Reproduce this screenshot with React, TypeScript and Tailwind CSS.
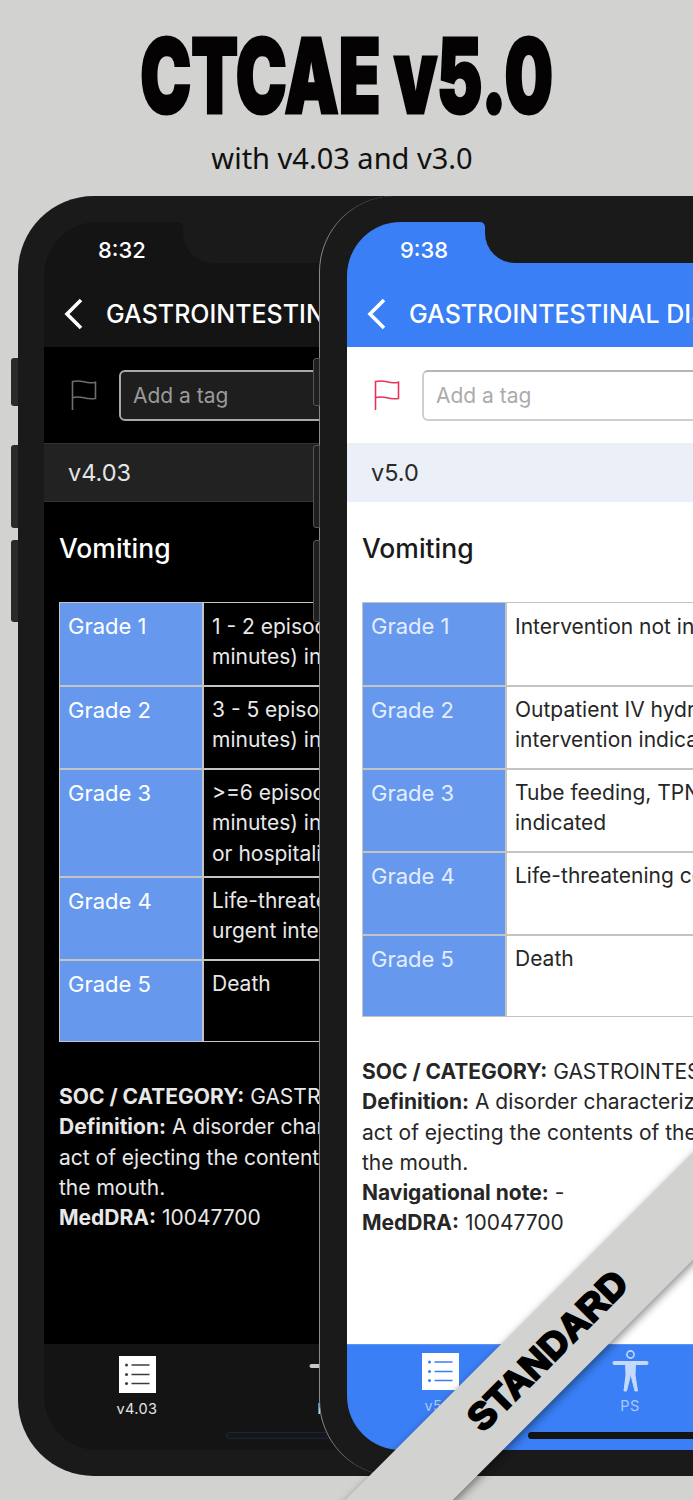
import type { ReactNode } from "react";

type Grade = { label: string; lines: string[]; height: string };

type Theme = {
  outer: string;
  side: string;
  notch: string;
  notchCorner: string;
  nav: string;
  time: string;
  body: string;
  flag: string;
  input: string;
  placeholder: string;
  versionBar: string;
  heading: string;
  cell: string;
  gradeText: string;
  meta: string;
  tabBar: string;
  tabLabel: string;
  homeBar: string;
};

const darkTheme: Theme = {
  outer: "left-[18px] w-[420px] pl-[26px]",
  side: "bg-[#2a2a2a]",
  notch: "left-[139px]",
  notchCorner: "left-[134px]",
  nav: "bg-[#141414]",
  time: "pl-[54px]",
  body: "bg-black",
  flag: "#6e6e6e",
  input: "bg-[#1e1e1e] border-[#a8a8a8]",
  placeholder: "text-[#9a9a9a]",
  versionBar: "bg-[#222222] text-[#e4e4e4] border-y border-[#333333]",
  heading: "text-white",
  cell: "bg-black text-[#e8e8e8]",
  gradeText: "text-white",
  meta: "text-[#e8e8e8]",
  tabBar: "bg-[#141414]",
  tabLabel: "text-[#e4e4e4]",
  homeBar: "left-[182px] bg-[#14171d] border border-[#1f2530]",
};

const lightTheme: Theme = {
  outer: "left-[319px] w-[520px] pl-[27px] border-l border-[#8a8a8a] z-10",
  side: "bg-[#1f1f1f] border border-[#555555]",
  notch: "left-[138px]",
  notchCorner: "left-[133px]",
  nav: "bg-[#3a7ff5]",
  time: "pl-[53px]",
  body: "bg-white",
  flag: "#e8325a",
  input: "bg-white border-[#cfcfcf] border-t-[#b5b5b5]",
  placeholder: "text-[#ababab]",
  versionBar: "bg-[#ebf0f8] text-[#2a2a2a]",
  heading: "text-[#1a1a1a]",
  cell: "bg-white text-[#262626]",
  gradeText: "text-[#e3edff]",
  meta: "text-[#262626]",
  tabBar: "bg-[#3a7ff5] border-t border-[#5a95f7]",
  tabLabel: "text-[#a9c8fb]",
  homeBar: "left-[181px] bg-[#141414]",
};

const darkGrades: Grade[] = [
  { label: "Grade 1", lines: ["1 - 2 episodes (separated by 5", "minutes) in 24 hrs"], height: "h-[81.5px]" },
  { label: "Grade 2", lines: ["3 - 5 episodes (separated by 5", "minutes) in 24 hrs"], height: "h-[83.5px]" },
  { label: "Grade 3", lines: [">=6 episodes (separated by 5", "minutes) in 24 hrs; tube feeding, TPN", "or hospitalization indicated"], height: "h-[108px]" },
  { label: "Grade 4", lines: ["Life-threatening consequences;", "urgent intervention indicated"], height: "h-[83px]" },
  { label: "Grade 5", lines: ["Death"], height: "h-[82px]" },
];

const lightGrades: Grade[] = [
  { label: "Grade 1", lines: ["Intervention not indicated"], height: "h-[81.5px]" },
  { label: "Grade 2", lines: ["Outpatient IV hydration; medical", "intervention indicated"], height: "h-[83.5px]" },
  { label: "Grade 3", lines: ["Tube feeding, TPN, or hospitalization", "indicated"], height: "h-[83px]" },
  { label: "Grade 4", lines: ["Life-threatening consequences"], height: "h-[83px]" },
  { label: "Grade 5", lines: ["Death"], height: "h-[82px]" },
];

function Flag({ color }: { color: string }) {
  return (
    <svg width="26" height="31" viewBox="0 0 26 31" fill="none" stroke={color} strokeWidth="1.6" className="shrink-0">
      <path d="M1.5 30V1.5C6 0.5 10 1 13 1.8C17 3 21 3 24.5 2.2V18.5C21 19 17 19 13 17.8C10 17 6 16.5 1.5 17.5" />
    </svg>
  );
}

function ListIcon({ color }: { color: string }) {
  return (
    <svg width="37" height="37" viewBox="0 0 37 37">
      <rect width="37" height="37" fill="white" />
      {[9, 18.5, 27.5].map((y) => (
        <g key={y} fill={color} stroke={color}>
          <circle cx="7.5" cy={y} r="1.5" stroke="none" />
          <line x1="12.5" y1={y} x2="30.5" y2={y} strokeWidth="1.6" />
        </g>
      ))}
    </svg>
  );
}

function PersonIcon({ color }: { color: string }) {
  return (
    <svg width="37" height="44" viewBox="0 0 37 44" fill="none" stroke={color} className="-mt-[3px]">
      <circle cx="18.5" cy="4.5" r="3.6" strokeWidth="1.6" />
      <path d="M2.5 13H34.5" strokeWidth="4" strokeLinecap="round" />
      <path
        d="M13.5 13H23.5L23 25L25.5 41L23 41L18.7 24L14.5 41L12 41L14 25Z"
        fill={color}
        strokeWidth="1"
        strokeLinejoin="round"
      />
    </svg>
  );
}

function Tab({ label, icon, className }: { label: string; icon: ReactNode; className: string }) {
  return (
    <div className="flex w-[190px] shrink-0 flex-col items-center">
      {icon}
      <span className={`text-[14.5px] leading-5 tracking-wide ${className}`}>{label}</span>
    </div>
  );
}

function Phone({
  theme,
  time,
  version,
  grades,
  meta,
  tabTop,
  listColor,
  personColor,
}: {
  theme: Theme;
  time: string;
  version: string;
  grades: Grade[];
  meta: ReactNode;
  tabTop: string;
  listColor: string;
  personColor: string;
}) {
  return (
    <div className={`absolute top-[196px] h-[1280px] rounded-l-[76px] bg-[#1a1a1a] py-[26px] ${theme.outer}`}>
      <div className={`absolute -left-[7px] top-[162px] h-[48px] w-[7px] rounded-l-[3px] ${theme.side}`} />
      <div className={`absolute -left-[7px] top-[249px] h-[83px] w-[7px] rounded-l-[3px] ${theme.side}`} />
      <div className={`absolute -left-[7px] top-[344px] h-[82px] w-[7px] rounded-l-[3px] ${theme.side}`} />

      <div className="relative flex h-full flex-col overflow-hidden rounded-l-[54px] font-['Inter',sans-serif]">
        <div className={`h-[125px] shrink-0 ${theme.nav}`}>
          <div className={`absolute top-0 h-[41px] w-[600px] rounded-bl-[30px] bg-[#1a1a1a] ${theme.notch}`} />
          <div className={`absolute top-0 h-[5px] w-[5px] bg-[#1a1a1a] ${theme.notchCorner}`}>
            <div className={`h-full w-full rounded-tr-[5px] ${theme.nav}`} />
          </div>
          <div className={`pt-[15px] text-[22px] font-medium leading-[27px] text-white ${theme.time}`}>{time}</div>
          <div className="flex items-center whitespace-nowrap pl-[20px] pt-[34px] text-[25px] font-medium leading-8 text-white">
            <svg width="20" height="32" viewBox="0 0 20 32" fill="none" stroke="white" strokeWidth="3.6" className="mr-[22px] shrink-0">
              <path d="M17 2L3 16L17 30" />
            </svg>
            <span>GASTROINTESTINAL DISORDERS</span>
          </div>
        </div>

        <div className={`flex min-h-0 flex-1 flex-col ${theme.body}`}>
          <div className="flex h-[96px] shrink-0 items-center pl-[27px]">
            <Flag color={theme.flag} />
            <div className={`ml-[22px] flex h-[51px] w-[800px] shrink-0 items-center rounded-[6px] border-2 pl-[12px] pt-[1px] text-[21px] ${theme.input} ${theme.placeholder}`}>
              Add a tag
            </div>
          </div>

          <div className={`flex h-[59px] shrink-0 items-center pl-[24px] text-[23.5px] ${theme.versionBar}`}>{version}</div>

          <div className={`flex h-[100px] shrink-0 items-end pb-[34px] pl-[15px] text-[26.5px] font-medium leading-10 ${theme.heading}`}>
            Vomiting
          </div>

          <div className="ml-[15px] w-[800px] shrink-0 border border-[#c4c4c4] border-r-0">
            {grades.map((grade, index) => (
              <div key={grade.label} className={`flex ${grade.height} ${index > 0 ? "border-t-2 border-[#c4c4c4]" : ""}`}>
                <div className={`w-[142px] shrink-0 bg-[#6699ee] pl-[8px] pt-[8px] text-[22px] leading-[30px] ${theme.gradeText}`}>
                  {grade.label}
                </div>
                <div className={`flex-1 whitespace-nowrap border-l-2 border-[#c4c4c4] pl-[8px] text-[21px] leading-[30.3px] ${index > 0 ? "pt-[8px]" : "pt-[9px]"} ${theme.cell}`}>
                  {grade.lines.map((line) => (
                    <div key={line}>{line}</div>
                  ))}
                </div>
              </div>
            ))}
          </div>

          <div className={`whitespace-nowrap pl-[15px] pt-[40px] text-[21px] leading-[30.3px] ${theme.meta}`}>{meta}</div>
        </div>

        <div className={`relative flex h-[106px] shrink-0 ${tabTop} ${theme.tabBar}`}>
          <div className="-ml-[2px] flex">
            <Tab label={version} icon={<ListIcon color={listColor} />} className={`mt-[6px] ${theme.tabLabel}`} />
            <Tab label="PS" icon={<PersonIcon color={personColor} />} className={`mt-[2px] ${theme.tabLabel}`} />
          </div>
          <div className={`absolute bottom-[11px] h-[7px] w-[600px] rounded-l-full ${theme.homeBar}`} />
        </div>
      </div>
    </div>
  );
}

export default function App() {
  return (
    <div className="relative h-[1500px] w-[693px] overflow-hidden bg-[#d2d2d0]">
      <header className="flex flex-col items-center pt-[18px]">
        <h1 className="scale-x-[0.662] whitespace-nowrap font-['Inter',sans-serif] text-[103px] font-black leading-[116px] text-[#050203] [-webkit-text-stroke:3px_#050203]">
          CTCAE v5.0
        </h1>
        <p className="mr-[9px] mt-[4px] whitespace-nowrap font-['Noto_Sans',sans-serif] text-[29px] leading-10 text-[#111111]">
          with v4.03 and v3.0
        </p>
      </header>

      <Phone
        theme={darkTheme}
        time="8:32"
        version="v4.03"
        grades={darkGrades}
        tabTop="pt-[12px]"
        listColor="#3c3c3c"
        personColor="#c8c8c8"
        meta={
          <>
            <div><b>SOC / CATEGORY:</b> GASTROINTESTINAL DISORDERS</div>
            <div><b>Definition:</b> A disorder characterized by the reflexive</div>
            <div>act of ejecting the contents of the stomach through</div>
            <div>the mouth.</div>
            <div><b>MedDRA:</b> 10047700</div>
          </>
        }
      />

      <Phone
        theme={lightTheme}
        time="9:38"
        version="v5.0"
        grades={lightGrades}
        tabTop="pt-[8px]"
        listColor="#3a7ff5"
        personColor="#c4d9fc"
        meta={
          <>
            <div><b>SOC / CATEGORY:</b> GASTROINTESTINAL DISORDERS</div>
            <div><b>Definition:</b> A disorder characterized by the reflexive</div>
            <div>act of ejecting the contents of the stomach through</div>
            <div>the mouth.</div>
            <div><b>Navigational note:</b> -</div>
            <div><b>MedDRA:</b> 10047700</div>
          </>
        }
      />

      <div className="absolute left-[100px] top-[1311px] z-20 flex h-[76px] w-[900px] -rotate-45 items-center justify-center bg-[#d2d2d0] pr-[5px] shadow-[0_3px_8px_rgba(0,0,0,0.45)]">
        <span className="font-['Liberation_Sans',sans-serif] text-[37px] font-bold tracking-[0.5px] text-black [-webkit-text-stroke:2.5px_black]">
          STANDARD
        </span>
      </div>
    </div>
  );
}
